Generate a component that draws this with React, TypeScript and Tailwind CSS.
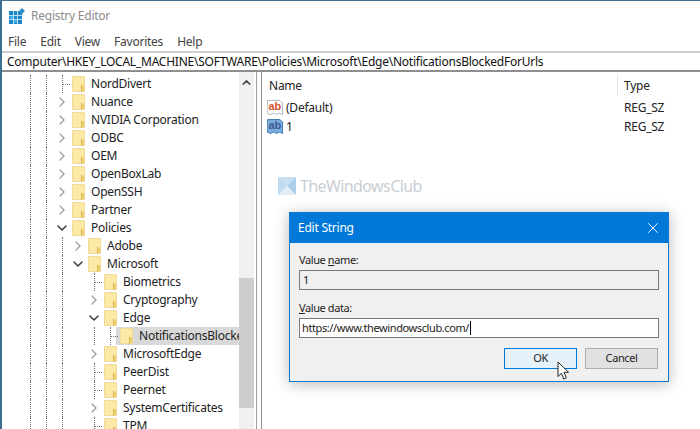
import { ChevronDown, ChevronRight, ChevronUp, X } from "lucide-react";

type TreeRow = {
  label: string;
  level: number;
  toggle?: "open" | "closed";
  stub?: boolean;
  selected?: boolean;
};

const treeRows: TreeRow[] = [
  { label: "NordDivert", level: 0, stub: true },
  { label: "Nuance", level: 0, toggle: "closed" },
  { label: "NVIDIA Corporation", level: 0, toggle: "closed" },
  { label: "ODBC", level: 0, toggle: "closed" },
  { label: "OEM", level: 0, toggle: "closed" },
  { label: "OpenBoxLab", level: 0, toggle: "closed" },
  { label: "OpenSSH", level: 0, toggle: "closed" },
  { label: "Partner", level: 0, toggle: "closed" },
  { label: "Policies", level: 0, toggle: "open" },
  { label: "Adobe", level: 1, toggle: "closed" },
  { label: "Microsoft", level: 1, toggle: "open" },
  { label: "Biometrics", level: 2, stub: true },
  { label: "Cryptography", level: 2, toggle: "closed" },
  { label: "Edge", level: 2, toggle: "open" },
  { label: "NotificationsBlockedForUrls", level: 3, stub: true, selected: true },
  { label: "MicrosoftEdge", level: 2, toggle: "closed" },
  { label: "PeerDist", level: 2, stub: true },
  { label: "Peernet", level: 2, stub: true },
  { label: "SystemCertificates", level: 2, toggle: "closed" },
  { label: "TPM", level: 2, stub: true },
];

const menuItems = ["File", "Edit", "View", "Favorites", "Help"];

function RegistryIcon() {
  return (
    <svg width="17" height="16" viewBox="0 0 17 16" className="shrink-0">
      <rect x="0" y="3" width="13" height="13" fill="#1b86c9" />
      <path d="M4.5 3v13M8.5 3v13M0 7.5h13M0 11.5h13" stroke="#e6f4fb" strokeWidth="0.8" />
      <rect x="1" y="8" width="3" height="3" fill="#36b2ea" />
      <rect x="5" y="12" width="3" height="3" fill="#36b2ea" />
      <path d="M13 0l3 3-3 3-3-3z" fill="#2f8fc4" />
    </svg>
  );
}

function FolderIcon() {
  return (
    <svg width="13" height="16" viewBox="0 0 13 16" className="shrink-0">
      <path d="M0.5 0.5h12v15H0.5z" fill="#fde9a6" stroke="#efdc9c" />
      <path d="M9.5 9.5h3v6h-3z" fill="#f3cf74" />
      <path d="M9.5 9v6.5" stroke="#d9b650" />
    </svg>
  );
}

function StringIcon({ filled }: { filled: boolean }) {
  return (
    <svg width="17" height="17" viewBox="0 0 17 17" className="shrink-0">
      <path
        d="M0.5 1.5h12.5l2.5 2.5v11.5l-3-1.5-3 1.5-3-1.5-3 1.5-3.5-1.5z"
        fill={filled ? "#78aedd" : "#ffffff"}
        stroke={filled ? "#4a7fb5" : "#b7b7b7"}
      />
      <text
        x="1.5"
        y="11"
        fontSize="11"
        fontWeight="700"
        fontFamily="'Liberation Sans', sans-serif"
        fill={filled ? "#3f5a96" : "#d2522c"}
      >
        ab
      </text>
    </svg>
  );
}

function WatermarkLogo() {
  return (
    <svg width="18" height="18" viewBox="0 0 18 18" className="shrink-0">
      <rect width="18" height="18" fill="#d6e7f5" />
      <path d="M0 0l9 9-9 9z" fill="#bcdaf2" />
      <path d="M18 0l-9 9 9 9z" fill="#a9cfec" />
      <path d="M0 0h18l-9 9z" fill="#c9dff0" />
      <path d="M0 18h18l-9-9z" fill="#e3eef7" />
    </svg>
  );
}

function Cursor() {
  return (
    <svg width="14" height="20" viewBox="0 0 14 20" className="absolute left-[555px] top-[360px]">
      <path
        d="M1 1v14.5l3.4-3.2 2.4 5.7 2.6-1.1-2.4-5.6h4.6z"
        fill="#ffffff"
        stroke="#222222"
        strokeWidth="1"
        strokeLinejoin="round"
      />
    </svg>
  );
}

function Guide({ stub }: { stub?: boolean }) {
  return (
    <div className="relative h-full w-4 shrink-0">
      <div className="absolute bottom-0 left-2 top-0 border-l border-dotted border-gray-500" />
      {stub ? <div className="absolute left-2 top-[9px] w-2 border-t border-dotted border-gray-500" /> : null}
    </div>
  );
}

function hasGuide(row: TreeRow, col: number) {
  if (col === 1 || col === 2) return true;
  if (col === 3) return row.level > 0;
  // the line of an open parent only runs down through its last child here
  return row.selected === true && col === 5;
}

function TreeItem({ row }: { row: TreeRow }) {
  // each cell is 16px; the chevron cell follows the level's guide cells
  const cells = row.level + 3;
  return (
    <div className="flex h-[18px] items-center pl-[4px]">
      {Array.from({ length: cells }).map((_, col) =>
        hasGuide(row, col) ? <Guide key={col} /> : <div key={col} className="h-full w-4 shrink-0" />,
      )}
      <div className="flex h-full w-4 shrink-0 items-center justify-center">
        {row.stub ? <Guide stub /> : null}
        {row.toggle === "closed" ? <ChevronRight size={16} strokeWidth={2.2} className="text-[#a6a6a6]" /> : null}
        {row.toggle === "open" ? <ChevronDown size={16} strokeWidth={2.4} className="text-[#404040]" /> : null}
      </div>
      <div className={`flex h-full min-w-0 flex-1 items-center ${row.selected ? "-ml-[2px] bg-[#d9d9d9] pl-[4px]" : "pl-[2px]"}`}>
        <FolderIcon />
        <span className="ml-[6px] whitespace-nowrap text-[12px] text-[#222222]">{row.label}</span>
      </div>
    </div>
  );
}

export default function App() {
  return (
    <div
      className="relative h-[429px] w-[700px] overflow-hidden border-l-2 border-t border-[#3d7092] bg-white tracking-[-0.24px] text-[#222222]"
      style={{ fontFamily: "'Noto Sans', sans-serif" }}
    >
      <div className="flex h-[29px] items-center gap-[5px] pl-[7px] pt-[1px]">
        <RegistryIcon />
        <span className="text-[12px] text-[#8c8c8c]">Registry Editor</span>
      </div>
      <div className="flex h-[21px] items-center gap-[14px] pl-[6px] pt-[2px] text-[12px] text-[#444444]">
        {menuItems.map((item) => (
          <span key={item}>{item}</span>
        ))}
      </div>
      <div className="flex h-[21px] items-center border-y-2 border-b-[#8f8f8f] border-t-[#d0d0d0] pl-[5px] pt-[1px] text-[12px] text-[#111111]">
        Computer\HKEY_LOCAL_MACHINE\SOFTWARE\Policies\Microsoft\Edge\NotificationsBlockedForUrls
      </div>
      <div className="flex h-[358px]">
        <div className="flex w-[254px] shrink-0">
          <div className="min-w-0 flex-1 overflow-hidden pt-[3px]">
            {treeRows.map((row) => (
              <TreeItem key={row.label} row={row} />
            ))}
          </div>
          <div className="flex w-[15px] shrink-0 flex-col bg-[#f0f0f0]">
            <div className="flex h-[18px] items-center justify-center pt-[2px]">
              <ChevronUp size={13} strokeWidth={3} className="text-[#505050]" />
            </div>
            <div className="mt-[188px] h-[130px] w-full bg-[#cdcdcd]" />
          </div>
          <div className="w-[2px] shrink-0" />
        </div>
        <div className="w-[5px] shrink-0 border-l border-[#a0a0a0]" />
        <div className="min-w-0 flex-1 border-l border-[#8f8f8f] pl-[4px]">
          <div className="flex h-[26px] items-center text-[12px]">
            <div className="w-[351px] pl-[3px] pt-[2px]">Name</div>
            <div className="h-[20px] border-l border-[#e5e5e5] pl-[6px] pt-[2px]">Type</div>
          </div>
          <div className="flex h-[19px] items-center text-[12px]">
            <div className="flex w-[351px] items-center gap-[2px] pl-[1px]">
              <StringIcon filled={false} />
              <span>(Default)</span>
            </div>
            <span className="pl-[7px]">REG_SZ</span>
          </div>
          <div className="flex h-[19px] items-center text-[12px]">
            <div className="flex w-[351px] items-center gap-[2px] pl-[1px]">
              <StringIcon filled />
              <span>1</span>
            </div>
            <span className="pl-[7px]">REG_SZ</span>
          </div>
        </div>
      </div>

      <div className="absolute left-[276px] top-[173px] flex items-center gap-[4px] text-[16px] tracking-[-0.6px] text-[#c9ced3]">
        <WatermarkLogo />
        <span>TheWindowsClub</span>
      </div>

      <div className="absolute left-[287px] top-[211px] flex h-[170px] w-[380px] flex-col border border-[#0f78d0] bg-[#f0f0f0] shadow-[0_2px_14px_rgba(0,0,0,0.28)]">
        <div className="flex h-[30px] shrink-0 items-center justify-between bg-[#0078d7] pl-[8px] pr-[6px] text-[12px] text-white">
          <span>Edit String</span>
          <X size={18} strokeWidth={1.2} />
        </div>
        <div className="flex flex-1 flex-col px-[9px] text-[11px] tracking-[-0.4px]">
          <label className="mt-[9px] h-[18px] leading-[15px]">
            Value <span className="underline">n</span>ame:
          </label>
          <div className="flex h-[20px] items-center border border-[#7a7a7a] pl-[3px]">1</div>
          <label className="mt-[10px] h-[18px] leading-[15px]">
            <span className="underline">V</span>alue data:
          </label>
          <div className="flex h-[20px] items-center border border-[#7a7a7a] bg-white pl-[2px]">
            https://www.thewindowsclub.com/
            <span className="ml-[1px] h-[14px] w-[1px] bg-black" />
          </div>
          <div className="mt-[10px] flex justify-end gap-[8px] pr-[1px]">
            <div className="flex h-[21px] w-[73px] items-center justify-center border border-[#0078d7] bg-[#e5f1fb]">OK</div>
            <div className="flex h-[21px] w-[73px] items-center justify-center border border-[#adadad] bg-[#e1e1e1]">Cancel</div>
          </div>
        </div>
      </div>
      <Cursor />
    </div>
  );
}
